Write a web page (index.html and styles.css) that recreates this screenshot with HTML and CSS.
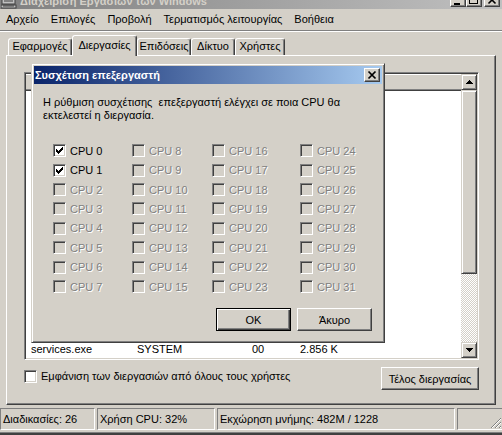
FILE: index.html
```html
<!DOCTYPE html>
<html>
<head>
<meta charset="utf-8">
<title>Διαχείριση Εργασιών των Windows</title>
<link rel="stylesheet" href="styles.css">
</head>
<body>
<div class="window">
  <div class="titlebar">
    <svg class="app-icon" width="16" height="16" viewBox="0 0 16 16">
      <rect x="1" y="2" width="13" height="9" fill="#c0c0c0" stroke="#404040"/>
      <rect x="3" y="4" width="9" height="5" fill="#808080"/>
      <rect x="0" y="12" width="15" height="3" fill="#c0c0c0" stroke="#404040" stroke-width="1"/>
      <path d="M2 13h11" stroke="#404040"/>
    </svg>
    <span class="title-text">Διαχείριση Εργασιών των Windows</span>
    <div class="caption-btns">
      <span class="cbtn"><svg width="14" height="12" viewBox="0 0 14 12"><path d="M3 9h6v2h-6z" fill="#000"/></svg></span>
      <span class="cbtn"><svg width="14" height="12" viewBox="0 0 14 12"><path d="M2 1h9v9h-9z M3 3v6h7v-6z" fill="#000" fill-rule="evenodd"/></svg></span>
      <span class="cbtn cbtn-close"><svg width="14" height="12" viewBox="0 0 14 12"><path d="M3.5 2.5l7 7M10.5 2.5l-7 7" stroke="#000" stroke-width="1.6"/></svg></span>
    </div>
  </div>
  <div class="menubar">
    <span class="menu-item">Αρχείο</span>
    <span class="menu-item">Επιλογές</span>
    <span class="menu-item">Προβολή</span>
    <span class="menu-item">Τερματισμός λειτουργίας</span>
    <span class="menu-item">Βοήθεια</span>
  </div>
  <div class="menu-sep"></div>
  <div class="tabs">
    <div class="tab tab-apps">Εφαρμογές</div>
    <div class="tab tab-active tab-proc">Διεργασίες</div>
    <div class="tab tab-perf">Επιδόσεις</div>
    <div class="tab tab-net">Δίκτυο</div>
    <div class="tab tab-users">Χρήστες</div>
  </div>
  <div class="panel">
    <div class="listview">
      <div class="lv-main">
        <div class="lv-header"></div>
        <div class="lv-body">
          <div class="lv-row">
            <span class="col-name">services.exe</span>
            <span class="col-user">SYSTEM</span>
            <span class="col-cpu">00</span>
            <span class="col-mem">2.856 K</span>
          </div>
        </div>
      </div>
      <div class="vscroll">
        <div class="sb-btn"><svg width="14" height="14" viewBox="0 0 14 14"><path d="M7 5h1v1h1v1h1v1h1v1h-7v-1h1v-1h1v-1h1z" fill="#000"/></svg></div>
        <div class="sb-thumb"></div>
        <div class="sb-track"></div>
        <div class="sb-btn"><svg width="14" height="14" viewBox="0 0 14 14"><path d="M4 5h7v1h-1v1h-1v1h-1v1h-1v-1h-1v-1h-1v-1h-1z" fill="#000"/></svg></div>
      </div>
    </div>
    <div class="panel-footer">
      <label class="show-all">
        <span class="cb"></span>
        <span>Εμφάνιση των διεργασιών από όλους τους χρήστες</span>
      </label>
      <button class="btn btn-end">Τέλος διεργασίας</button>
    </div>
  </div>
  <div class="statusbar">
    <div class="sb-seg seg-proc">Διαδικασίες: 26</div>
    <div class="sb-seg seg-cpu">Χρήση CPU: 32%</div>
    <div class="sb-seg seg-mem">Εκχώρηση μνήμης: 482M / 1228</div>
    <div class="sb-seg seg-grip">
      <svg class="grip" width="12" height="12" viewBox="0 0 12 12">
        <path d="M11 1L1 11M11 5L5 11M11 9L9 11" stroke="#808080" stroke-width="1"/>
        <path d="M11 2L2 11M11 6L6 11M11 10L10 11" stroke="#fff" stroke-width="1"/>
      </svg>
    </div>
  </div>
  <div class="window-frame-bottom"></div>
</div>

<div class="dialog">
  <div class="dlg-title">
    <span class="dlg-title-text">Συσχέτιση επεξεργαστή</span>
    <span class="dlg-close"><svg width="14" height="12" viewBox="0 0 14 12"><path d="M3.5 2.5l7 7M10.5 2.5l-7 7" stroke="#000" stroke-width="1.7"/></svg></span>
  </div>
  <div class="dlg-body">
    <p class="dlg-text">Η ρύθμιση συσχέτισης&nbsp; επεξεργαστή ελέγχει σε ποια CPU θα<br>εκτελεστεί η διεργασία.</p>
    <div class="cpu-grid">
      <div class="cpu"><span class="cb"><svg width="11" height="11" viewBox="0 0 11 11"><path d="M2 4h1v3h-1zM3 5h1v3h-1zM4 6h1v3h-1zM5 5h1v3h-1zM6 4h1v3h-1zM7 3h1v3h-1zM8 2h1v3h-1z" fill="#000"/></svg></span><span>CPU 0</span></div>
      <div class="cpu"><span class="cb"><svg width="11" height="11" viewBox="0 0 11 11"><path d="M2 4h1v3h-1zM3 5h1v3h-1zM4 6h1v3h-1zM5 5h1v3h-1zM6 4h1v3h-1zM7 3h1v3h-1zM8 2h1v3h-1z" fill="#000"/></svg></span><span>CPU 1</span></div>
      <div class="cpu cpu-off"><span class="cb"></span><span>CPU 2</span></div>
      <div class="cpu cpu-off"><span class="cb"></span><span>CPU 3</span></div>
      <div class="cpu cpu-off"><span class="cb"></span><span>CPU 4</span></div>
      <div class="cpu cpu-off"><span class="cb"></span><span>CPU 5</span></div>
      <div class="cpu cpu-off"><span class="cb"></span><span>CPU 6</span></div>
      <div class="cpu cpu-off"><span class="cb"></span><span>CPU 7</span></div>
      <div class="cpu cpu-off"><span class="cb"></span><span>CPU 8</span></div>
      <div class="cpu cpu-off"><span class="cb"></span><span>CPU 9</span></div>
      <div class="cpu cpu-off"><span class="cb"></span><span>CPU 10</span></div>
      <div class="cpu cpu-off"><span class="cb"></span><span>CPU 11</span></div>
      <div class="cpu cpu-off"><span class="cb"></span><span>CPU 12</span></div>
      <div class="cpu cpu-off"><span class="cb"></span><span>CPU 13</span></div>
      <div class="cpu cpu-off"><span class="cb"></span><span>CPU 14</span></div>
      <div class="cpu cpu-off"><span class="cb"></span><span>CPU 15</span></div>
      <div class="cpu cpu-off"><span class="cb"></span><span>CPU 16</span></div>
      <div class="cpu cpu-off"><span class="cb"></span><span>CPU 17</span></div>
      <div class="cpu cpu-off"><span class="cb"></span><span>CPU 18</span></div>
      <div class="cpu cpu-off"><span class="cb"></span><span>CPU 19</span></div>
      <div class="cpu cpu-off"><span class="cb"></span><span>CPU 20</span></div>
      <div class="cpu cpu-off"><span class="cb"></span><span>CPU 21</span></div>
      <div class="cpu cpu-off"><span class="cb"></span><span>CPU 22</span></div>
      <div class="cpu cpu-off"><span class="cb"></span><span>CPU 23</span></div>
      <div class="cpu cpu-off"><span class="cb"></span><span>CPU 24</span></div>
      <div class="cpu cpu-off"><span class="cb"></span><span>CPU 25</span></div>
      <div class="cpu cpu-off"><span class="cb"></span><span>CPU 26</span></div>
      <div class="cpu cpu-off"><span class="cb"></span><span>CPU 27</span></div>
      <div class="cpu cpu-off"><span class="cb"></span><span>CPU 28</span></div>
      <div class="cpu cpu-off"><span class="cb"></span><span>CPU 29</span></div>
      <div class="cpu cpu-off"><span class="cb"></span><span>CPU 30</span></div>
      <div class="cpu cpu-off"><span class="cb"></span><span>CPU 31</span></div>
    </div>
    <div class="dlg-buttons">
      <button class="btn btn-default">OK</button>
      <button class="btn">Άκυρο</button>
    </div>
  </div>
</div>
</body>
</html>
```
FILE: styles.css
```css
* { box-sizing: border-box; }
html, body { margin: 0; padding: 0; }
body {
  width: 502px;
  height: 435px;
  overflow: hidden;
  position: relative;
  background: #d4d0c8;
  font: 11px "Liberation Sans", Arial, sans-serif;
  color: #000;
}

.window {
  height: 435px;
  display: flex;
  flex-direction: column;
}

/* title bar (mostly off-screen) */
.titlebar {
  flex-shrink: 0;
  height: 17px;
  margin-top: -8px;
  background: linear-gradient(to right, #808080, #c0c0c0);
  display: flex;
  align-items: flex-end;
  padding: 0 2px 0 1px;
}
.app-icon { flex-shrink: 0; }
.title-text {
  color: #d4d0c8;
  font-weight: bold;
  line-height: 13px;
  margin: 0 0 1px 3px;
  white-space: nowrap;
}
.caption-btns {
  margin-left: auto;
  display: flex;
  margin-bottom: 2px;
}
.cbtn {
  width: 16px;
  height: 14px;
  border: 1px solid;
  border-color: #fff #404040 #404040 #fff;
  box-shadow: inset -1px -1px #808080;
  background: #d4d0c8;
  display: flex;
}
.cbtn-close { margin-left: 2px; }

/* menu */
.menubar {
  flex-shrink: 0;
  height: 21px;
  display: flex;
  align-items: center;
}
.menu-item {
  padding: 0 6px;
  line-height: 17px;
  white-space: nowrap;
}
.menu-sep {
  flex-shrink: 0;
  height: 2px;
  border-top: 1px solid #808080;
  border-bottom: 1px solid #fff;
}

/* tabs */
.tabs {
  flex-shrink: 0;
  height: 23px;
  display: flex;
  align-items: flex-end;
  padding-left: 8px;
  position: relative;
  z-index: 2;
}
.tab {
  height: 17px;
  border: 1px solid;
  border-bottom: none;
  border-color: #fff #404040 transparent #fff;
  box-shadow: inset -1px 0 #808080;
  border-radius: 3px 3px 0 0;
  text-align: center;
  line-height: 15px;
  white-space: nowrap;
  background: #d4d0c8;
}
.tab-active {
  height: 21px;
  margin-bottom: -1px;
  line-height: 18px;
  position: relative;
  z-index: 3;
}
.tab-apps { width: 64px; }
.tab-proc { width: 65px; }
.tab-perf { width: 54px; }
.tab-net { width: 44px; }
.tab-users { width: 50px; }

/* panel */
.panel {
  flex-shrink: 0;
  margin-left: 6px;
  width: 490px;
  height: 350px;
  border: 1px solid;
  border-color: #fff #404040 #404040 #fff;
  box-shadow: inset -1px -1px #808080;
  padding: 16px 0 0 17px;
}
.listview {
  width: 455px;
  height: 288px;
  background: #fff;
  border: 1px solid;
  border-color: #808080 #fff #fff #808080;
  box-shadow: inset 1px 1px #404040, inset -1px -1px #d4d0c8;
  padding: 1px;
  display: flex;
}
.lv-main {
  flex: 1;
  display: flex;
  flex-direction: column;
}
.lv-header {
  height: 17px;
  background: #d4d0c8;
  border-top: 1px solid #fff;
  border-bottom: 1px solid #404040;
  box-shadow: inset 0 -1px #808080;
}
.lv-body {
  flex: 1;
  display: flex;
  flex-direction: column;
  justify-content: flex-end;
}
.lv-row {
  height: 15px;
  line-height: 14px;
  display: flex;
  white-space: nowrap;
  margin-bottom: 1px;
}
.col-name { width: 111px; padding-left: 5px; }
.col-user { width: 115px; }
.col-cpu { width: 48px; }
.col-mem { width: 60px; }

.vscroll {
  width: 16px;
  display: flex;
  flex-direction: column;
}
.sb-btn, .sb-thumb {
  border: 1px solid;
  border-color: #d4d0c8 #404040 #404040 #d4d0c8;
  box-shadow: inset 1px 1px #fff, inset -1px -1px #808080;
  background: #d4d0c8;
}
.sb-btn {
  height: 16px;
  display: flex;
}
.sb-thumb { height: 184px; }
.sb-track {
  flex: 1;
  background: repeating-conic-gradient(#fff 0 25%, #d4d0c8 0 50%) 0 0 / 2px 2px;
}

.panel-footer {
  width: 455px;
  margin-top: 7px;
  display: flex;
  justify-content: space-between;
  align-items: flex-start;
}
.show-all {
  display: flex;
  align-items: center;
  gap: 4px;
  margin-top: 3px;
  line-height: 13px;
}

/* checkbox */
.cb {
  width: 13px;
  height: 13px;
  flex-shrink: 0;
  border: 1px solid;
  border-color: #808080 #fff #fff #808080;
  box-shadow: inset 1px 1px #404040, inset -1px -1px #d4d0c8;
  background: #fff;
  display: flex;
}
.cpu-off .cb { background: #d4d0c8; }

/* buttons */
.btn {
  font: inherit;
  color: #000;
  background: #d4d0c8;
  border: 1px solid;
  border-color: #fff #404040 #404040 #fff;
  box-shadow: inset -1px -1px #808080;
  padding: 0;
  height: 23px;
  width: 75px;
}
.btn-default {
  border-color: #000;
  box-shadow: inset 1px 1px #fff, inset -1px -1px #404040, inset -2px -2px #808080;
}
.btn-end { width: 98px; }

/* status bar */
.statusbar {
  flex-shrink: 0;
  margin-top: 3px;
  height: 22px;
  display: flex;
  gap: 2px;
}
.sb-seg {
  height: 22px;
  border: 1px solid;
  border-color: #808080 #fff #fff #808080;
  padding-left: 2px;
  line-height: 20px;
  white-space: nowrap;
}
.seg-proc { width: 95px; }
.seg-cpu { width: 118px; }
.seg-mem { width: 238px; }
.seg-grip {
  flex: 1;
  display: flex;
  justify-content: flex-end;
  align-items: flex-end;
  padding: 0;
  border-right: none;
}
.grip { display: block; }

.window-frame-bottom {
  margin-top: auto;
  height: 3px;
  flex-shrink: 0;
  border-top: 1px solid #808080;
  background: #404040;
}

/* dialog overlay */
.dialog {
  position: absolute;
  left: 31px;
  top: 63px;
  width: 354px;
  height: 280px;
  background: #d4d0c8;
  border: 1px solid;
  border-color: #d4d0c8 #404040 #404040 #d4d0c8;
  box-shadow: inset 1px 1px #fff, inset -1px -1px #808080;
  padding: 2px;
  display: flex;
  flex-direction: column;
  z-index: 10;
}
.dlg-title {
  height: 18px;
  flex-shrink: 0;
  background: linear-gradient(to right, #0a246a, #a6caf0);
  display: flex;
  align-items: center;
  padding: 0 2px 0 1px;
}
.dlg-title-text {
  color: #fff;
  font-weight: bold;
  white-space: nowrap;
}
.dlg-close {
  margin-left: auto;
  width: 16px;
  height: 14px;
  border: 1px solid;
  border-color: #fff #404040 #404040 #fff;
  box-shadow: inset -1px -1px #808080;
  background: #d4d0c8;
  display: flex;
}
.dlg-body {
  flex: 1;
  display: flex;
  flex-direction: column;
  padding: 0 9px 9px 9px;
}
.dlg-text {
  margin: 12px 0 0 0;
  line-height: 13px;
  white-space: nowrap;
}
.cpu-grid {
  margin: 19px 0 0 10px;
  display: grid;
  grid-auto-flow: column;
  grid-template-columns: 79px 80px 88px 1fr;
  grid-template-rows: repeat(8, 19.43px);
}
.cpu {
  display: flex;
  align-items: center;
  gap: 4px;
  white-space: nowrap;
}
.cpu-off span:last-child {
  color: #808080;
  text-shadow: 1px 1px #fff;
}
.dlg-buttons {
  margin-top: auto;
  margin-right: 1px;
  display: flex;
  justify-content: flex-end;
  gap: 6px;
}
```
